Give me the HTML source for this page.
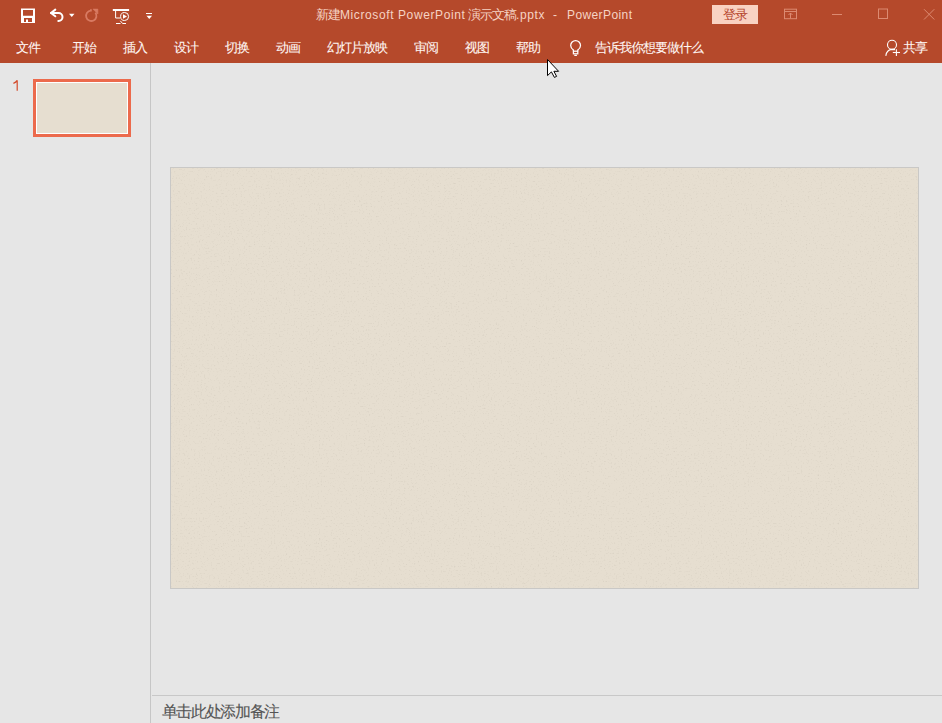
<!DOCTYPE html>
<html><head><meta charset="utf-8">
<style>
*{margin:0;padding:0;box-sizing:border-box}
html,body{width:942px;height:723px;overflow:hidden;background:#E6E6E6;font-family:"Liberation Sans",sans-serif}
.abs{position:absolute}
#bar{left:0;top:0;width:942px;height:63px;background:#B5492B}
.tab{position:absolute;top:39.5px;font-size:13px;line-height:16px;color:#FFF7F4;white-space:nowrap;letter-spacing:-1px;-webkit-text-stroke:0.08px #FFF7F4}
.ttl{position:absolute;top:7px;line-height:16px;color:#F5D3C4;white-space:nowrap}
.cj{font-size:13px;letter-spacing:-1px}
.la{font-size:12px;letter-spacing:0.6px}
#login{left:712px;top:5px;width:46px;height:19px;background:#F9D2C2;color:#B5432A;font-size:13px;line-height:19px;letter-spacing:-1px;padding-left:11px}
#left{left:150px;top:63px;width:1px;height:660px;background:#C6C6C6}
#thumb{left:33px;top:79px;width:98px;height:58px;border:3px solid #EC6A4C;background:#fff;padding:1px}
#thumb div{width:100%;height:100%;background:#E6DED0}
#num{left:12px;top:77px;font-size:15px;line-height:16px;color:#DA5A3B}
#slide{left:170px;top:167px;width:749px;height:422px;border:1px solid #C9C8C6;background:#E6DED0}
#notesline{left:152px;top:695px;width:790px;height:1px;background:#C8C8C8}
#notes{left:161.5px;top:703px;font-size:16px;line-height:18px;letter-spacing:-1.33px;color:#555;-webkit-text-stroke:0.12px #555;white-space:nowrap}
</style></head>
<body>
<div id="bar" class="abs"></div>
<!-- QAT icons -->
<svg class="abs" style="left:0;top:0" width="160" height="32" viewBox="0 0 160 32">
  <path fill="#fff" fill-rule="evenodd" d="M21 8.5 H35 V23 H21 Z M23 10 H33 V15.8 H23 Z M24 17.9 H32 V22 H28 V19.5 H26 V22 H24 Z"/>
  <path d="M51 13 H58.5 A4 4 0 0 1 58.5 21 H58.3" fill="none" stroke="#fff" stroke-width="2" stroke-linecap="round"/>
  <path d="M55.3 9.6 L51 13 L55.3 16.3" fill="none" stroke="#fff" stroke-width="2" stroke-linecap="round" stroke-linejoin="round"/>
  <path d="M69 13.8 H74.5 L71.75 17.1 Z" fill="#fff"/>
  <g stroke="#D87A62" fill="none" stroke-width="1.8">
    <path d="M90.9 9.2 V10.6 A5.2 5.2 0 1 0 95.4 12.6"/>
  </g>
  <path d="M93 9.1 H97.9 V14 Z" fill="#D87A62" stroke="#D87A62" stroke-width="0.6" stroke-linejoin="round"/>
  <g stroke="#fff" fill="none" stroke-width="1">
    <line x1="112.8" y1="10" x2="129.1" y2="10" stroke-width="2"/>
    <polyline points="115.6,11 115.6,18 120,18"/>
    <circle cx="124.6" cy="16.5" r="4"/>
    <line x1="116" y1="23.5" x2="120.5" y2="23.5"/>
    <line x1="122.5" y1="23.5" x2="126" y2="23.5"/>
    <line x1="120.3" y1="20.8" x2="122.6" y2="23.5"/>
  </g>
  <path d="M123 14.3 L127 16.5 L123 18.7 Z" fill="#fff"/>
  <line x1="146" y1="13.5" x2="152" y2="13.5" stroke="#fff" stroke-width="1"/>
  <path d="M146.5 15.8 H152 L149.25 19 Z" fill="#fff"/>
</svg>
<div class="ttl cj" style="left:316px">新建</div>
<div class="ttl la" style="left:340px">Microsoft PowerPoint</div>
<div class="ttl cj" style="left:468px">演示文稿</div>
<div class="ttl la" style="left:516px">.pptx</div>
<div class="ttl la" style="left:553px">-</div>
<div class="ttl la" style="left:567px;letter-spacing:0.4px">PowerPoint</div>
<div id="login" class="abs">登录</div>
<!-- window controls -->
<svg class="abs" style="left:770px;top:0" width="172" height="32" viewBox="770 0 172 32">
  <g stroke="#DC8A71" fill="none" stroke-width="1">
    <rect x="784.5" y="9.2" width="12" height="9.5"/>
    <line x1="784.5" y1="11.5" x2="796.5" y2="11.5"/>
    <line x1="790.5" y1="13" x2="790.5" y2="18.5"/>
    <polyline points="788.5,15 790.5,13 792.5,15"/>
    <line x1="832" y1="14.5" x2="842" y2="14.5"/>
    <rect x="878.5" y="9" width="9" height="9.5"/>
    <line x1="924" y1="9.2" x2="934.3" y2="19.5"/>
    <line x1="934.3" y1="9.2" x2="924" y2="19.5"/>
  </g>
</svg>
<div class="tab" style="left:16px">文件</div>
<div class="tab" style="left:72px">开始</div>
<div class="tab" style="left:123px">插入</div>
<div class="tab" style="left:174px">设计</div>
<div class="tab" style="left:225px">切换</div>
<div class="tab" style="left:276px">动画</div>
<div class="tab" style="left:327px">幻灯片放映</div>
<div class="tab" style="left:414px">审阅</div>
<div class="tab" style="left:465px">视图</div>
<div class="tab" style="left:516px">帮助</div>
<div class="tab" style="left:595px">告诉我你想要做什么</div>
<div class="tab" style="left:903px">共享</div>
<svg class="abs" style="left:560px;top:34px" width="40" height="26" viewBox="560 34 40 26">
  <g stroke="#fff" fill="none" stroke-width="1.25">
    <path d="M573.4 51.2 V49.9 C571.7 48.7 570.7 47.2 570.7 45.4 A4.9 4.9 0 0 1 580.5 45.4 C580.5 47.2 579.5 48.7 577.8 49.9 V51.2"/>
    <rect x="573.4" y="51.2" width="4.4" height="2.6"/>
    <line x1="574.3" y1="55.4" x2="576.9" y2="55.4"/>
  </g>
</svg>
<svg class="abs" style="left:880px;top:34px" width="30" height="26" viewBox="880 34 30 26">
  <g stroke="#fff" fill="none" stroke-width="1.1">
    <circle cx="892" cy="44.7" r="4.5"/>
    <path d="M885.8 55.8 C886.3 52.2 888.6 49.6 892 49.4 C893.2 49.4 894.2 49.5 895 49.6"/>
    <line x1="896.4" y1="49.3" x2="896.4" y2="56"/>
    <line x1="892.8" y1="52.5" x2="900" y2="52.5"/>
  </g>
</svg>
<div id="left" class="abs"></div>
<svg class="abs" style="left:10px;top:76px" width="12" height="18" viewBox="10 76 12 18"><path d="M17.2 80.2 V90.8 M17.2 80.4 C16.4 81.8 15 82.8 13.4 83.4" fill="none" stroke="#D44C2C" stroke-width="1.2"/></svg>
<div id="thumb" class="abs"><div></div></div>
<div id="slide" class="abs"><svg width="747" height="420" style="display:block">
<filter id="nz" x="0" y="0" width="100%" height="100%"><feTurbulence type="fractalNoise" baseFrequency="0.6" numOctaves="3" seed="7" stitchTiles="stitch"/><feColorMatrix type="matrix" values="0 0 0 0 0.5  0 0 0 0 0.45  0 0 0 0 0.38  0 0 0 3 -1.75"/></filter>
<rect width="747" height="420" filter="url(#nz)" opacity="0.28"/></svg></div>
<div id="notesline" class="abs"></div>
<div id="notes" class="abs">单击此处添加备注</div>
<svg class="abs" style="left:546px;top:58px" width="16" height="22" viewBox="-1 -1 16 22">
  <path d="M0.5 0.5 V16.6 L4.4 12.9 L7.4 18.4 L9.6 17.4 L6.9 12.3 H11.6 Z" fill="#fff" stroke="#000" stroke-width="1" stroke-linejoin="round"/>
</svg>
</body></html>
